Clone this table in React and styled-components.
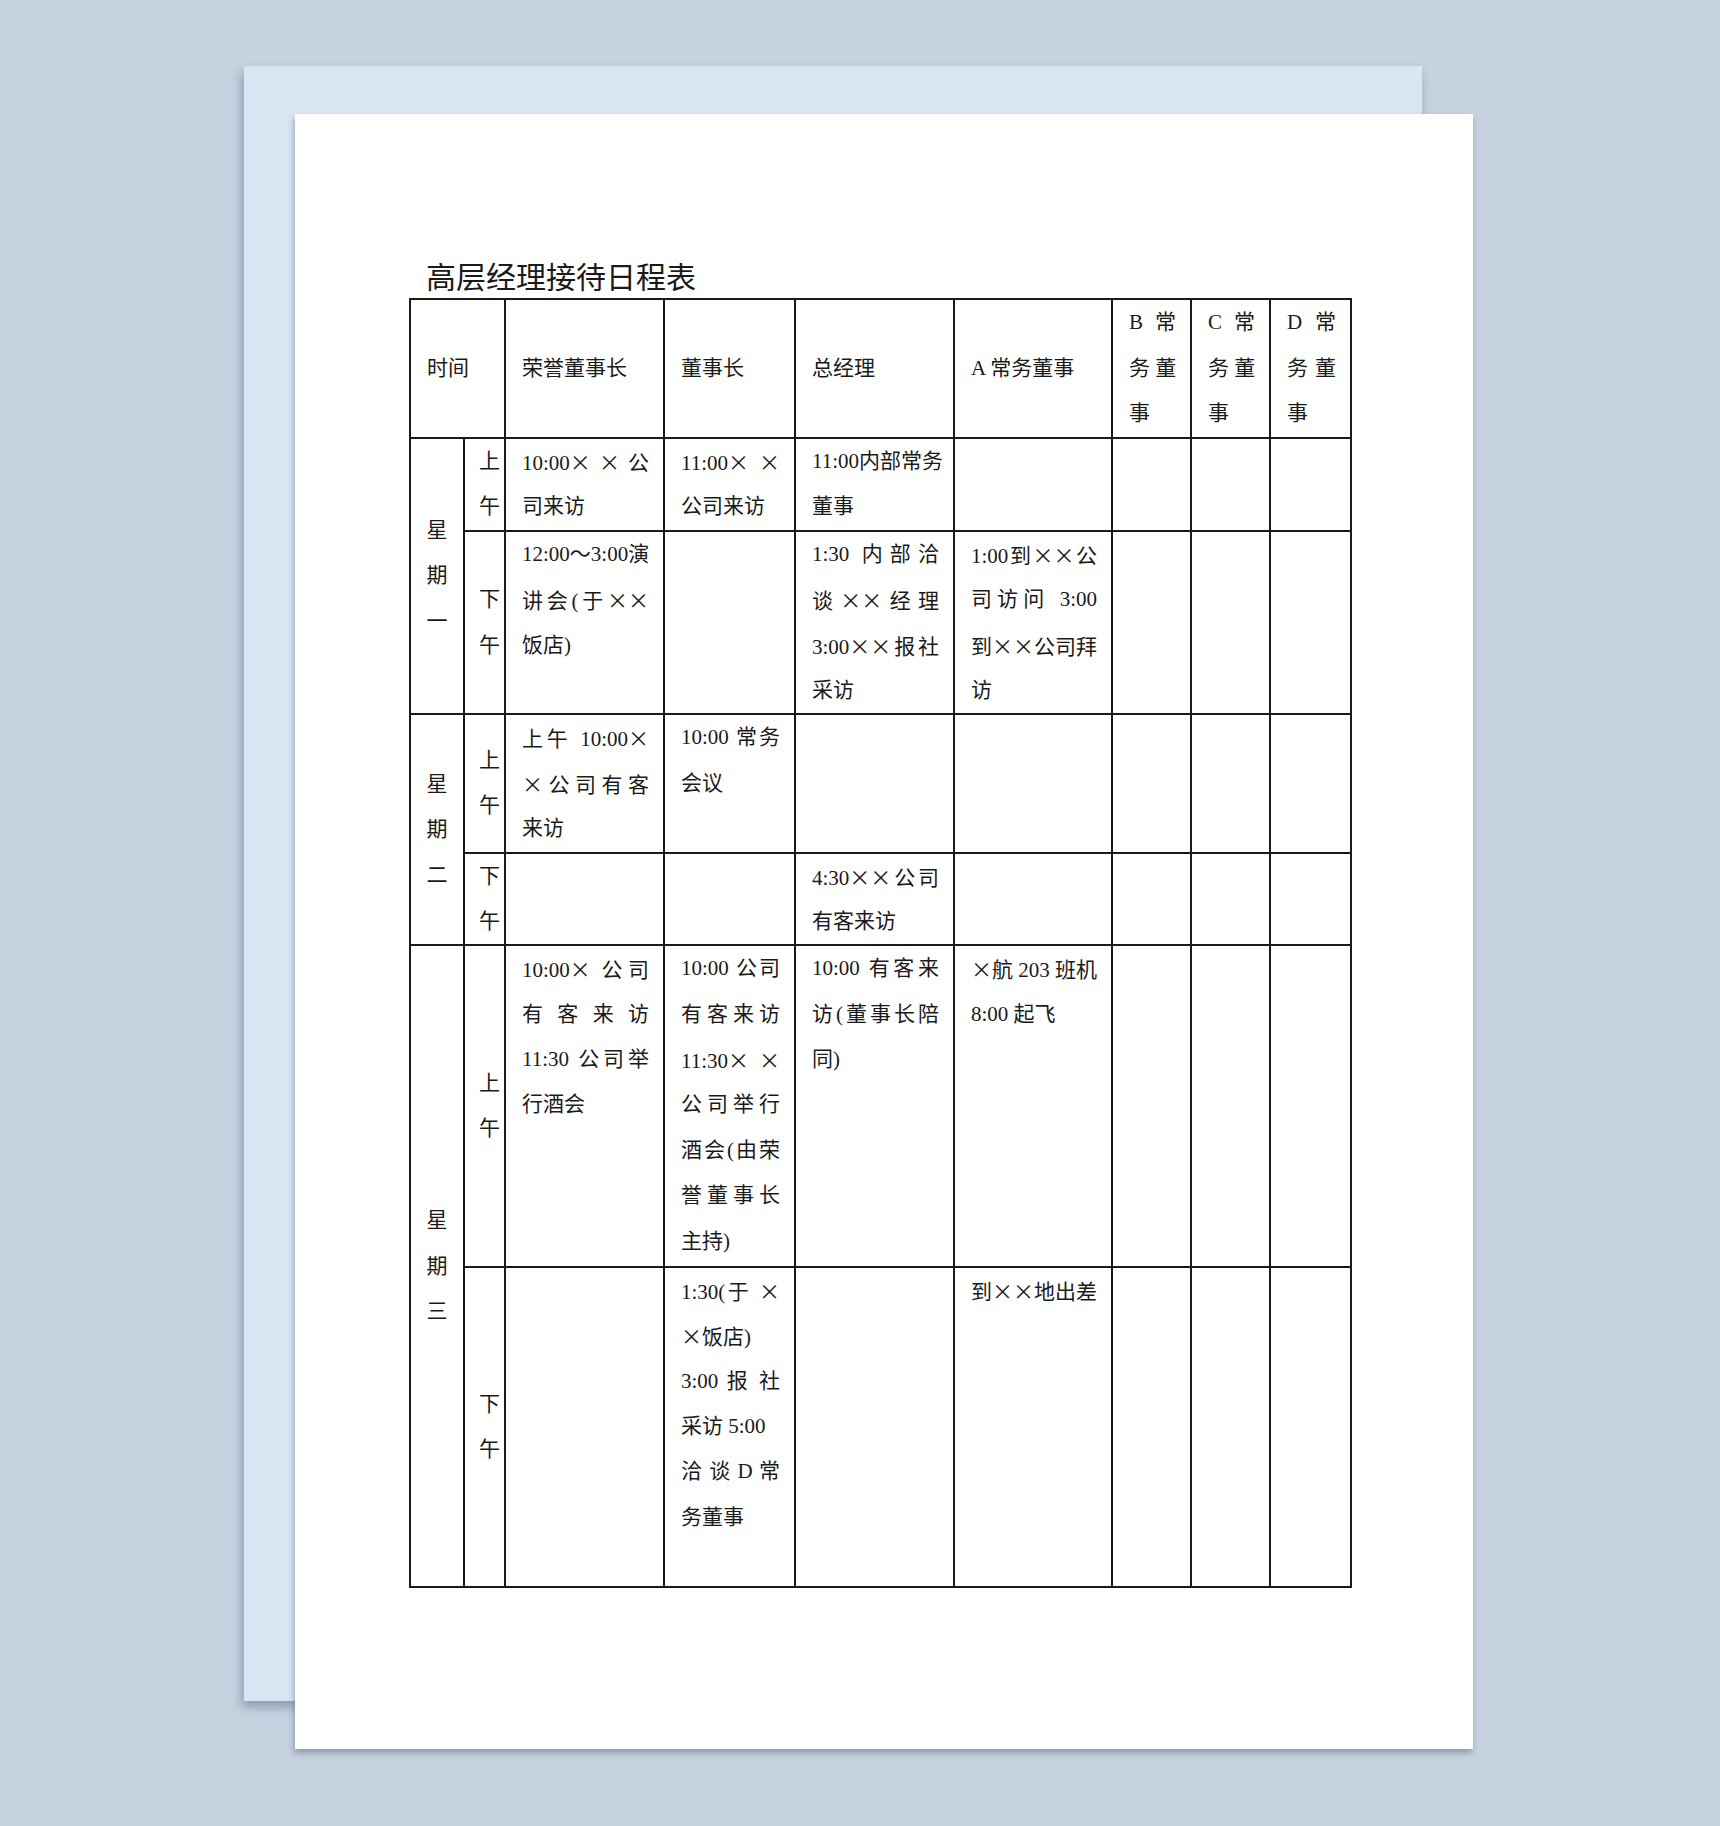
import styled, { createGlobalStyle } from 'styled-components';

const GlobalStyle = createGlobalStyle`
    html, body {
        margin: 0;
        padding: 0;
        background: #c6d2e0;
    }
    body {
        font-family: "Liberation Serif", "Noto Sans CJK SC", serif;
    }
`;

const LH = 45.4;

// Column widths of the schedule table
const cols = [54, 41, 159, 131, 159, 158, 79, 79, 81];

// Each cell is a list of printed lines, as in the original document.
// A line starting with "|" is printed at its natural width (not spread).
const days = [
    {
        name: '星期一',
        am: {
            h: 92.4,
            cells: [
                ['10:00× × 公', '司来访'],
                ['11:00× ×', '公司来访'],
                ['11:00内部常务', '董事'],
                [], [], [], [],
            ],
        },
        pm: {
            h: 183.5,
            cells: [
                ['12:00～3:00演', '讲会(于××', '饭店)'],
                [],
                ['1:30 内部洽', '谈××经理', '3:00××报社', '采访'],
                ['1:00到××公', '司访问 3:00', '到××公司拜', '访'],
                [], [], [],
            ],
        },
    },
    {
        name: '星期二',
        am: {
            h: 137.5,
            cells: [
                ['上午 10:00×', '×公司有客', '来访'],
                ['10:00 常务', '会议'],
                [], [], [], [], [],
            ],
        },
        pm: {
            h: 91.5,
            cells: [
                [], [],
                ['4:30××公司', '有客来访'],
                [], [], [], [],
            ],
        },
    },
    {
        name: '星期三',
        am: {
            h: 321.5,
            cells: [
                ['10:00× 公司', '有客来访', '11:30 公司举', '行酒会'],
                ['10:00 公司', '有客来访', '11:30× ×', '公司举行', '酒会(由荣', '誉董事长', '主持)'],
                ['10:00 有客来', '访(董事长陪', '同)'],
                ['×航 203 班机', '8:00 起飞'],
                [], [], [],
            ],
        },
        pm: {
            h: 320.5,
            cells: [
                [],
                ['1:30(于 ×', '|×饭店)', '3:00 报 社', '|采访 5:00', '洽 谈 D 常', '务董事'],
                [],
                ['到××地出差'],
                [], [], [],
            ],
        },
    },
];

const headers = [
    ['荣誉董事长'],
    ['董事长'],
    ['总经理'],
    ['A 常务董事'],
    ['B 常', '务 董', '事'],
    ['C 常', '务 董', '事'],
    ['D 常', '务 董', '事'],
];

// the × sign is set full width, like in the Song typeface of the original
const withCross = (text) =>
    text.split(/(×)/).map((part, i) =>
        part === '×' ? <Cross key={i}>×</Cross> : part
    );

const Lines = ({ lines }) => (
    <>
        {lines.map((line, i) => {
            const natural = line.startsWith('|');
            return (
                <Line key={i} $justify={!natural && i < lines.length - 1}>
                    {withCross(natural ? line.slice(1) : line)}
                </Line>
            );
        })}
    </>
);

const Stacked = ({ text }) => (
    <>
        {text.split('').map((ch, i) => (
            <Line key={i}>{ch}</Line>
        ))}
    </>
);

const App = () => {
    return (
        <>
            <GlobalStyle />
            <Stage>
                <BackSheet />
                <FrontSheet>
                    <Title>高层经理接待日程表</Title>
                    <Table>
                        <colgroup>
                            {cols.map((w, i) => <col key={i} style={{ width: w }} />)}
                        </colgroup>
                        <tbody>
                            <Row $h={139}>
                                <HeadCell colSpan={2}>时间</HeadCell>
                                {headers.map((lines, i) => (
                                    <HeadCell key={i}><Lines lines={lines} /></HeadCell>
                                ))}
                            </Row>
                            {days.map(day => (
                                [day.am, day.pm].map((half, hi) => (
                                    <Row key={day.name + hi} $h={half.h}>
                                        {hi === 0 && (
                                            <DayCell rowSpan={2}><Stacked text={day.name} /></DayCell>
                                        )}
                                        <HalfCell><Stacked text={hi === 0 ? '上午' : '下午'} /></HalfCell>
                                        {half.cells.map((lines, ci) => (
                                            <Cell key={ci}><Lines lines={lines} /></Cell>
                                        ))}
                                    </Row>
                                ))
                            ))}
                        </tbody>
                    </Table>
                </FrontSheet>
            </Stage>
        </>
    );
};


/** Styled components */
const Stage = styled.div`
    display: grid;
    justify-content: start;
    align-content: start;
    padding: 66px 0 0 244px;
    min-height: 1826px;
    box-sizing: border-box;
`;

const Sheet = styled.div`
    grid-area: 1 / 1;
    width: 1178px;
    height: 1635px;
    box-sizing: border-box;
`;

const BackSheet = styled(Sheet)`
    background: #dae5f3;
    box-shadow: -2px 6px 10px rgba(70, 88, 112, 0.45);
`;

const FrontSheet = styled(Sheet)`
    margin: 48px 0 0 51px;
    background: #ffffff;
    box-shadow: -1px 4px 6px rgba(70, 88, 112, 0.45);
    padding: 143px 0 0 114px;
`;

const Title = styled.div`
    font-family: "Noto Sans CJK SC", sans-serif;
    font-size: 30px;
    line-height: 36px;
    color: #1a1a1a;
    padding-left: 17px;
    margin-bottom: 5px;
`;

const Table = styled.table`
    width: 941px;
    table-layout: fixed;
    border-collapse: collapse;
    font-size: 21px;
    line-height: ${LH}px;
    color: #1a1a1a;
`;

const Row = styled.tr`
    height: ${p => p.$h}px;
`;

const Cell = styled.td`
    border: 2px solid #1a1a1a;
    padding: 0 14px 0 16px;
    vertical-align: top;
    white-space: nowrap;
    overflow: visible;
`;

const HeadCell = styled(Cell)`
    vertical-align: middle;
`;

const DayCell = styled(Cell)`
    vertical-align: middle;
    text-align: center;
    padding: 0;
`;

const HalfCell = styled(Cell)`
    vertical-align: middle;
    text-align: right;
    padding: 0 4px 0 0;
`;

const Line = styled.div`
    height: ${LH}px;
    text-align-last: ${p => (p.$justify ? 'justify' : 'auto')};
    text-justify: inter-character;
`;

const Cross = styled.span`
    font-family: "Noto Sans CJK SC", sans-serif;
    font-feature-settings: "fwid";
`;


export default App;
